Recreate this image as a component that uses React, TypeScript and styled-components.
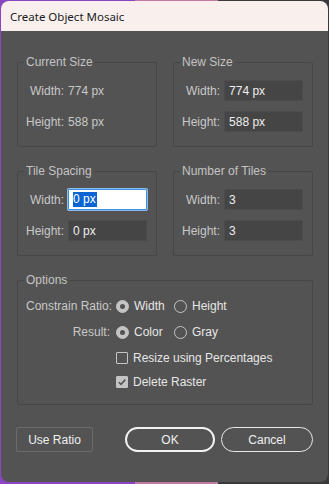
import React from "react";
import styled, { createGlobalStyle } from "styled-components";

const Global = createGlobalStyle`
  html, body { margin: 0; padding: 0; }
  body {
    width: 329px;
    height: 484px;
    overflow: hidden;
    background: linear-gradient(to right, #8b45c2 0px, #8b45c2 135px, #c27aa4 135px, #c27aa4 218px, #3a3a3a 218px);
    font-family: "Liberation Sans", Arial, sans-serif;
  }
  #root { padding: 1px 0 0 1px; }
`;

const Window = styled.div`
  width: 327px;
  height: 481px;
  border-radius: 8px;
  overflow: hidden;
  background: #535353;
  display: flex;
  flex-direction: column;
`;

const TitleBar = styled.div`
  height: 30px;
  flex: none;
  background: #f9f0ee;
  color: #1b1b1b;
  font-family: "Segoe UI", "Noto Sans", sans-serif;
  font-size: 11.5px;
  display: flex;
  align-items: center;
  padding-left: 9px;
`;

const Body = styled.div`
  padding: 24px 15px 0 16px;
  display: grid;
  grid-template-columns: 140px 140px;
  column-gap: 16px;
  row-gap: 17px;
`;

const Group = styled.fieldset<{ $h: number; $span?: boolean }>`
  margin: 0;
  padding: 11px 9px 0 8px;
  box-sizing: border-box;
  height: ${(p) => p.$h}px;
  border: 1px solid #474747;
  border-radius: 2px;
  min-width: 0;
  grid-column: ${(p) => (p.$span ? "1 / span 2" : "auto")};
`;

const Legend = styled.legend`
  padding: 0 2px;
  margin-left: -2px;
  font-size: 12px;
  line-height: 14px;
  color: #c3c3c3;
`;

const FieldGrid = styled.div`
  display: grid;
  grid-template-columns: 1fr 79px;
  grid-auto-rows: 21px;
  column-gap: 4px;
  row-gap: 10px;
  align-items: center;
`;

const Label = styled.span`
  text-align: right;
  font-size: 12px;
  color: #c8c8c8;
  white-space: nowrap;
`;

const Value = styled.span`
  font-size: 12px;
  color: #c8c8c8;
  white-space: nowrap;
`;

const Input = styled.div<{ $focused?: boolean }>`
  box-sizing: border-box;
  height: 21px;
  padding: 0 4px;
  display: flex;
  align-items: center;
  font-size: 12px;
  white-space: nowrap;
  border-radius: 1px;
  color: ${(p) => (p.$focused ? "#000" : "#eeeeee")};
  background: ${(p) => (p.$focused ? "#ffffff" : "#454545")};
  border: 1px solid ${(p) => (p.$focused ? "#3d8ee0" : "#4c4c4c")};
  box-shadow: ${(p) => (p.$focused ? "0 0 0 1px #8cbcec" : "none")};
`;

const Selection = styled.span`
  background: #0a64d2;
  color: #ffffff;
  line-height: 15px;
  padding-right: 1px;
`;

const OptionsGrid = styled.div`
  display: grid;
  grid-template-columns: 84px auto;
  grid-template-rows: 26px 26px 26px 22px;
  column-gap: 6px;
  align-items: center;
  margin-top: -5px;
`;

const Choices = styled.div`
  display: flex;
  align-items: center;
`;

const Choice = styled.label`
  width: 58px;
  display: flex;
  align-items: center;
  gap: 5px;
  font-size: 12px;
  color: #e6e6e6;
  white-space: nowrap;
`;

const Radio = styled.span<{ $on?: boolean }>`
  box-sizing: border-box;
  width: 13px;
  height: 13px;
  flex: none;
  border-radius: 50%;
  border: 1px solid #c4c4c4;
  background: ${(p) => (p.$on ? "#c4c4c4" : "transparent")};
  display: flex;
  align-items: center;
  justify-content: center;
  &::after {
    content: "";
    display: ${(p) => (p.$on ? "block" : "none")};
    width: 5px;
    height: 5px;
    border-radius: 50%;
    background: #535353;
  }
`;

const Check = styled.span<{ $on?: boolean }>`
  box-sizing: border-box;
  width: 12px;
  height: 12px;
  flex: none;
  border: 1px solid #c4c4c4;
  border-radius: 1px;
  background: ${(p) => (p.$on ? "#c4c4c4" : "transparent")};
  display: flex;
  align-items: center;
  justify-content: center;
`;

const CheckRow = styled.label`
  grid-column: 2;
  display: flex;
  align-items: center;
  gap: 5px;
  font-size: 12px;
  color: #e6e6e6;
  white-space: nowrap;
`;

const Footer = styled.div`
  display: flex;
  align-items: center;
  padding: 22px 15px 0 15px;
`;

const Button = styled.button<{ $kind: "plain" | "primary" | "secondary" }>`
  box-sizing: border-box;
  height: 25px;
  font-family: "Liberation Sans", Arial, sans-serif;
  font-size: 12px;
  color: #f0f0f0;
  background: transparent;
  padding: 0;
  cursor: pointer;
  width: ${(p) => (p.$kind === "plain" ? 77 : p.$kind === "primary" ? 90 : 92)}px;
  border-radius: ${(p) => (p.$kind === "plain" ? "2px" : "13px")};
  border: ${(p) =>
    p.$kind === "plain"
      ? "1px solid #6b6b6b"
      : p.$kind === "primary"
      ? "2px solid #f2f2f2"
      : "1px solid #e8e8e8"};
  margin-left: ${(p) => (p.$kind === "primary" ? "32px" : p.$kind === "secondary" ? "6px" : "0")};
`;

function CheckMark() {
  return (
    <svg width="10" height="10" viewBox="0 0 10 10">
      <path d="M1.8 5.2 L4 7.4 L8.3 2.6" fill="none" stroke="#555" strokeWidth="1.6" />
    </svg>
  );
}

export default function App() {
  return (
    <>
      <Global />
      <Window>
        <TitleBar>Create Object Mosaic</TitleBar>
        <Body>
          <Group $h={92}>
            <Legend>Current Size</Legend>
            <FieldGrid>
              <Label>Width:</Label>
              <Value>774 px</Value>
              <Label>Height:</Label>
              <Value>588 px</Value>
            </FieldGrid>
          </Group>
          <Group $h={92}>
            <Legend>New Size</Legend>
            <FieldGrid>
              <Label>Width:</Label>
              <Input>774 px</Input>
              <Label>Height:</Label>
              <Input>588 px</Input>
            </FieldGrid>
          </Group>
          <Group $h={92}>
            <Legend>Tile Spacing</Legend>
            <FieldGrid>
              <Label>Width:</Label>
              <Input $focused>
                <Selection>0 px</Selection>
              </Input>
              <Label>Height:</Label>
              <Input>0 px</Input>
            </FieldGrid>
          </Group>
          <Group $h={92}>
            <Legend>Number of Tiles</Legend>
            <FieldGrid>
              <Label>Width:</Label>
              <Input>3</Input>
              <Label>Height:</Label>
              <Input>3</Input>
            </FieldGrid>
          </Group>
          <Group $h={132} $span>
            <Legend>Options</Legend>
            <OptionsGrid>
              <Label>Constrain Ratio:</Label>
              <Choices>
                <Choice>
                  <Radio $on />
                  Width
                </Choice>
                <Choice>
                  <Radio />
                  Height
                </Choice>
              </Choices>
              <Label>Result:</Label>
              <Choices>
                <Choice>
                  <Radio $on />
                  Color
                </Choice>
                <Choice>
                  <Radio />
                  Gray
                </Choice>
              </Choices>
              <CheckRow>
                <Check />
                Resize using Percentages
              </CheckRow>
              <CheckRow>
                <Check $on>
                  <CheckMark />
                </Check>
                Delete Raster
              </CheckRow>
            </OptionsGrid>
          </Group>
        </Body>
        <Footer>
          <Button $kind="plain">Use Ratio</Button>
          <Button $kind="primary">OK</Button>
          <Button $kind="secondary">Cancel</Button>
        </Footer>
      </Window>
    </>
  );
}
